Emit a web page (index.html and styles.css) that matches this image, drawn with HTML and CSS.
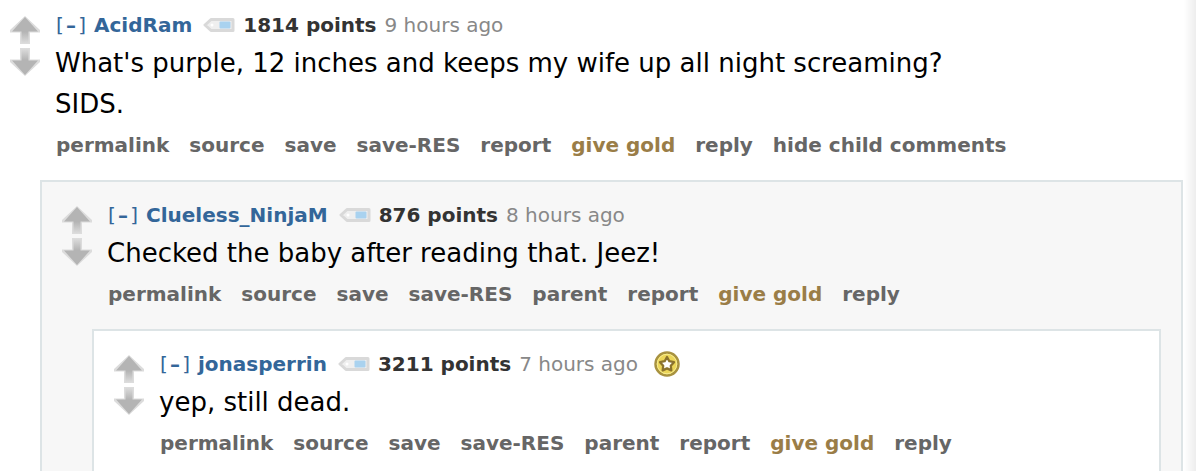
FILE: index.html
```
<!DOCTYPE html>
<html lang="en">
<head>
<meta charset="utf-8">
<title>Comments</title>
<link rel="stylesheet" href="styles.css">
</head>
<body>
<svg class="defs" aria-hidden="true">
  <defs>
    <linearGradient id="fade" x1="0" y1="0" x2="0" y2="1">
      <stop offset="0.55" stop-color="#b4b4b4"/>
      <stop offset="1" stop-color="#dedede"/>
    </linearGradient>
    <symbol id="arrow" viewBox="0 0 30 28">
      <path d="M15 0L30 14V16.500H20V28H10V16.500H0V14Z" fill="#dcdcdc"/>
      <path d="M15 1L28 15.500H18.500V28H11.500V15.500H2Z" fill="url(#fade)"/>
    </symbol>
    <symbol id="tag" viewBox="0 0 32 14">
      <path d="M2 7L8 1.500H30V12.500H8Z" fill="#efefef" stroke="#d9d9d9" stroke-width="3" stroke-linejoin="round"/>
      <rect x="16.500" y="3.500" width="11" height="7" rx="1" fill="#a9d2ef"/>
      <circle cx="9" cy="7" r="1.500" fill="#fff"/>
    </symbol>
    <symbol id="gold" viewBox="0 0 26 26">
      <circle cx="13" cy="13" r="11.500" fill="#ecd659" stroke="#a89240" stroke-width="2.500"/>
      <circle cx="13" cy="13" r="9.800" fill="none" stroke="#f7ec90" stroke-width="1"/>
      <path d="M13 6L15.300 10.200L20 11.200L16.800 14.700L17.300 19.400L13 17.400L8.700 19.400L9.200 14.700L6 11.200L10.700 10.200Z" fill="#fff" stroke="#8b732d" stroke-width="2.300" stroke-linejoin="round"/>
    </symbol>
  </defs>
</svg>
<main class="thread">
  <article class="comment">
    <div class="votes">
      <button class="vote" aria-label="upvote"><svg><use href="#arrow"/></svg></button>
      <button class="vote vote-down" aria-label="downvote"><svg><use href="#arrow"/></svg></button>
    </div>
    <div class="entry">
      <p class="tagline"><a class="toggle" href="#">[<b>–</b>]</a><a class="author" href="#">AcidRam</a><svg class="tag"><use href="#tag"/></svg><b class="score">1814 points</b><time>9 hours ago</time></p>
      <div class="body"><p>What's purple, 12 inches and keeps my wife up all night screaming?</p><p>SIDS.</p></div>
      <nav class="actions"><a href="#">permalink</a><a href="#">source</a><a href="#">save</a><a href="#">save-RES</a><a href="#">report</a><a class="give-gold" href="#">give gold</a><a href="#">reply</a><a href="#">hide child comments</a></nav>
    </div>
    <article class="comment child shaded">
      <div class="votes">
        <button class="vote" aria-label="upvote"><svg><use href="#arrow"/></svg></button>
        <button class="vote vote-down" aria-label="downvote"><svg><use href="#arrow"/></svg></button>
      </div>
      <div class="entry">
        <p class="tagline"><a class="toggle" href="#">[<b>–</b>]</a><a class="author" href="#">Clueless_NinjaM</a><svg class="tag"><use href="#tag"/></svg><b class="score">876 points</b><time>8 hours ago</time></p>
        <div class="body"><p>Checked the baby after reading that. Jeez!</p></div>
        <nav class="actions"><a href="#">permalink</a><a href="#">source</a><a href="#">save</a><a href="#">save-RES</a><a href="#">parent</a><a href="#">report</a><a class="give-gold" href="#">give gold</a><a href="#">reply</a></nav>
      </div>
      <article class="comment child">
        <div class="votes">
          <button class="vote" aria-label="upvote"><svg><use href="#arrow"/></svg></button>
          <button class="vote vote-down" aria-label="downvote"><svg><use href="#arrow"/></svg></button>
        </div>
        <div class="entry">
          <p class="tagline"><a class="toggle" href="#">[<b>–</b>]</a><a class="author" href="#">jonasperrin</a><svg class="tag"><use href="#tag"/></svg><b class="score">3211 points</b><time>7 hours ago</time><svg class="gold"><use href="#gold"/></svg></p>
          <div class="body"><p>yep, still dead.</p></div>
          <nav class="actions"><a href="#">permalink</a><a href="#">source</a><a href="#">save</a><a href="#">save-RES</a><a href="#">parent</a><a href="#">report</a><a class="give-gold" href="#">give gold</a><a href="#">reply</a></nav>
        </div>
      </article>
    </article>
  </article>
</main>
</body>
</html>
```
FILE: styles.css
```
* { box-sizing: border-box; }
body {
  margin: 0;
  background: #fff;
  color: #000;
  font-family: Verdana, "DejaVu Sans", sans-serif;
  font-size: 20px;
  overflow: hidden;
}
p { margin: 0; }
a { color: #369; text-decoration: none; }
.defs { position: absolute; width: 0; height: 0; }
.thread {
  min-height: 100vh;
  padding: 10px 13px 0 10px;
  background: linear-gradient(to left, #ededed, #fff 12px);
}
.comment {
  display: grid;
  grid-template-columns: 30px minmax(0, 1fr);
}
.child {
  grid-column: 2;
  margin-top: 20px;
  padding: 18px 20px 20px;
  border: 2px solid #dde4e6;
  background: #fff;
}
.shaded { background: #f7f7f7; }
.votes {
  display: flex;
  flex-direction: column;
  gap: 4px;
  padding-top: 6px;
}
.vote {
  width: 30px;
  height: 28px;
  padding: 0;
  border: 0;
  background: none;
}
.vote svg { display: block; width: 30px; height: 28px; }
.vote-down svg { transform: rotate(180deg); }
.entry { padding-left: 15px; white-space: nowrap; }
.tagline {
  display: flex;
  align-items: center;
  gap: 8px;
  height: 30px;
  padding-left: 1px;
  color: #888;
}
.toggle { display: flex; justify-content: space-between; width: 30px; }
.author { font-weight: bold; }
.tag { width: 32px; height: 14px; margin-left: 3px; }
.score { color: #333; }
.gold { width: 26px; height: 26px; margin-left: 8px; }
.body { margin: 3px 0 5px; font-size: 26px; line-height: 41px; }
.actions {
  display: flex;
  gap: 20px;
  padding-left: 1px;
  line-height: 30px;
  font-weight: bold;
}
.actions a { color: #666; }
.actions .give-gold { color: #9a7d47; }
```
